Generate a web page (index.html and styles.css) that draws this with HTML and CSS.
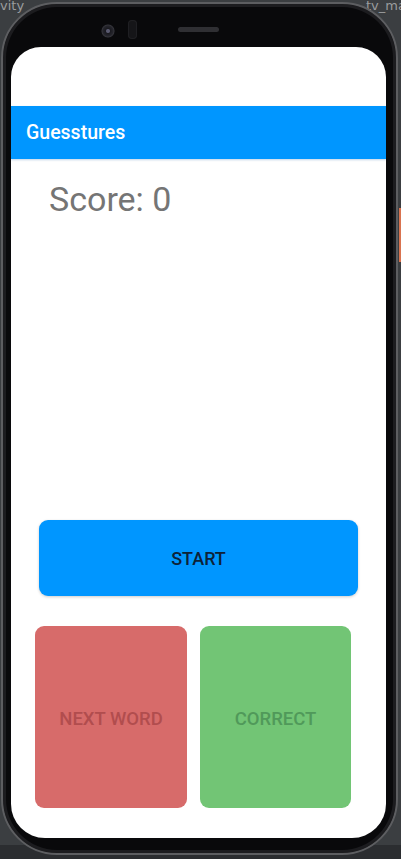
FILE: index.html
```html
<!DOCTYPE html>
<html>
<head>
<meta charset="utf-8">
<link rel="stylesheet" href="styles.css">
</head>
<body>
<span class="ide-label left">vity</span>
<span class="ide-label right">tv_ma</span>
<span class="ide-strip"></span>
<div class="phone">
  <div class="bezel-top">
    <span class="camera"></span>
    <span class="sensor"></span>
    <span class="speaker"></span>
  </div>
  <div class="screen">
    <div class="statusbar"></div>
    <div class="appbar">Guesstures</div>
    <div class="content">
      <div class="score">Score: 0</div>
      <button class="btn start">START</button>
      <div class="row">
        <button class="btn tile skip">NEXT WORD</button>
        <button class="btn tile correct">CORRECT</button>
      </div>
    </div>
  </div>
</div>
</body>
</html>
```

FILE: styles.css
```css
html, body {
  margin: 0;
  padding: 0;
}
body {
  width: 401px;
  height: 859px;
  overflow: hidden;
  background: linear-gradient(#3b3e41 0, #3b3e41 845px, #2b2d30 845px);
  font-family: Roboto, "Noto Sans", sans-serif;
  position: relative;
}
.ide-label {
  position: absolute;
  top: -2px;
  font-size: 13px;
  color: #9a9c9e;
  font-family: "DejaVu Sans", sans-serif;
}
.ide-label.left { left: 0; }
.ide-label.right { left: 366px; }
.ide-strip {
  position: absolute;
  left: 399px;
  top: 208px;
  width: 2px;
  height: 54px;
  background: #d9734f;
}
.phone {
  position: relative;
  z-index: 1;
  box-sizing: border-box;
  width: 397px;
  height: 853px;
  margin: 2px 0 0 1px;
  border: 2px solid #5d5e61;
  border-radius: 56px;
  background: #09090b;
  box-shadow: inset 0 0 0 3px #1c1c1f;
  padding: 0 8px;
}
.bezel-top {
  height: 43px;
  position: relative;
}
.camera {
  position: absolute;
  left: 90px;
  top: 20px;
  width: 14px;
  height: 14px;
  border-radius: 50%;
  background: radial-gradient(circle, #5a5a70 0 1.5px, #1a1a20 2.5px, #25252c 5px, #34343a 6px, #0d0d10 7px);
}
.sensor {
  position: absolute;
  left: 117px;
  top: 16px;
  width: 9px;
  height: 19px;
  border-radius: 4px;
  background: #151518;
  box-shadow: inset 0 0 0 1px #1f1f23;
}
.speaker {
  position: absolute;
  left: 167px;
  top: 23px;
  width: 41px;
  height: 5px;
  border-radius: 3px;
  background: #2f2f33;
}
.screen {
  width: 375px;
  height: 791px;
  background: #fff;
  border-radius: 30px 30px 34px 34px;
  overflow: hidden;
  display: flex;
  flex-direction: column;
}
.statusbar {
  height: 59px;
}
.appbar {
  height: 53px;
  background: #0096ff;
  color: #fff;
  font-size: 19.5px;
  font-weight: 500;
  line-height: 53px;
  padding-left: 15px;
  box-shadow: 0 1px 2px rgba(0, 80, 160, 0.25);
}
.content {
  display: flex;
  flex-direction: column;
}
.score {
  margin: 20px 0 0 38px;
  font-size: 34px;
  line-height: 40px;
  color: #757575;
}
.btn {
  border: none;
  font-family: Roboto, "Noto Sans", sans-serif;
  font-weight: 500;
  padding: 0;
  border-radius: 9px;
}
.start {
  margin: 301px 0 0 28px;
  width: 319px;
  height: 76px;
  background: #0096ff;
  color: #0d2238;
  font-size: 18px;
  box-shadow: 0 1px 3px rgba(0, 0, 0, 0.2);
}
.row {
  display: flex;
  gap: 13px;
  margin: 30px 0 0 24px;
}
.tile {
  height: 182px;
  font-size: 18.5px;
  padding-top: 3px;
}
.skip {
  width: 152px;
  background: #d76b6a;
  color: #b14d4e;
}
.correct {
  width: 151px;
  background: #72c575;
  color: #50995a;
}
```
